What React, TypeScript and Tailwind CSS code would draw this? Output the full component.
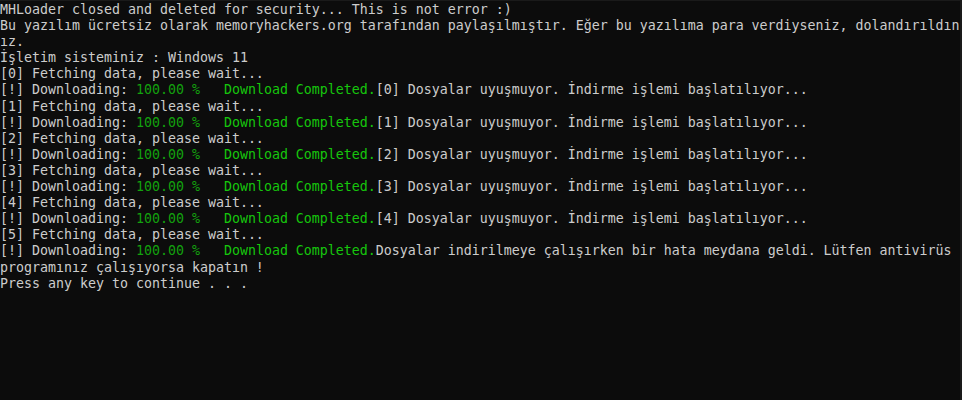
import React from "react";

type Seg = { text: string; tone?: "dim" | "bright" };

const downloadLine = (tail: string): Seg[] => [
  { text: "[!] Downloading: " },
  { text: "100.00 %", tone: "dim" },
  { text: "   " },
  { text: "Download Completed.", tone: "bright" },
  { text: tail },
];

const lines: Seg[][] = [
  [{ text: "MHLoader closed and deleted for security... This is not error :)" }],
  [
    {
      text: "Bu yazılım ücretsiz olarak memoryhackers.org tarafından paylaşılmıştır. Eğer bu yazılıma para verdiyseniz, dolandırıldın",
    },
  ],
  [{ text: "ız." }],
  [{ text: "İşletim sisteminiz : Windows 11" }],
];

for (let i = 0; i < 6; i++) {
  lines.push([{ text: `[${i}] Fetching data, please wait...` }]);
  if (i < 5) {
    lines.push(downloadLine(`[${i}] Dosyalar uyuşmuyor. İndirme işlemi başlatılıyor...`));
  } else {
    lines.push(
      downloadLine("Dosyalar indirilmeye çalışırken bir hata meydana geldi. Lütfen antivirüs")
    );
  }
}
lines.push([{ text: "programınız çalışıyorsa kapatın !" }]);
lines.push([{ text: "Press any key to continue . . ." }]);

export default function App() {
  return (
    <div className="w-[962px] h-[400px] bg-[#0c0c0c] border-t border-r-2 border-[#1a1a1a] overflow-hidden">
      <div className="pt-px font-['DejaVu_Sans_Mono',monospace] text-[13.29px] leading-[16.1px] text-[#cccccc] whitespace-pre">
        {lines.map((line, i) => (
          <div key={i}>
            {line.map((seg, j) => (
              <span
                key={j}
                className={
                  seg.tone === "dim"
                    ? "text-[#13a10e]"
                    : seg.tone === "bright"
                    ? "text-[#16c60c]"
                    : ""
                }
              >
                {seg.text}
              </span>
            ))}
          </div>
        ))}
      </div>
    </div>
  );
}
